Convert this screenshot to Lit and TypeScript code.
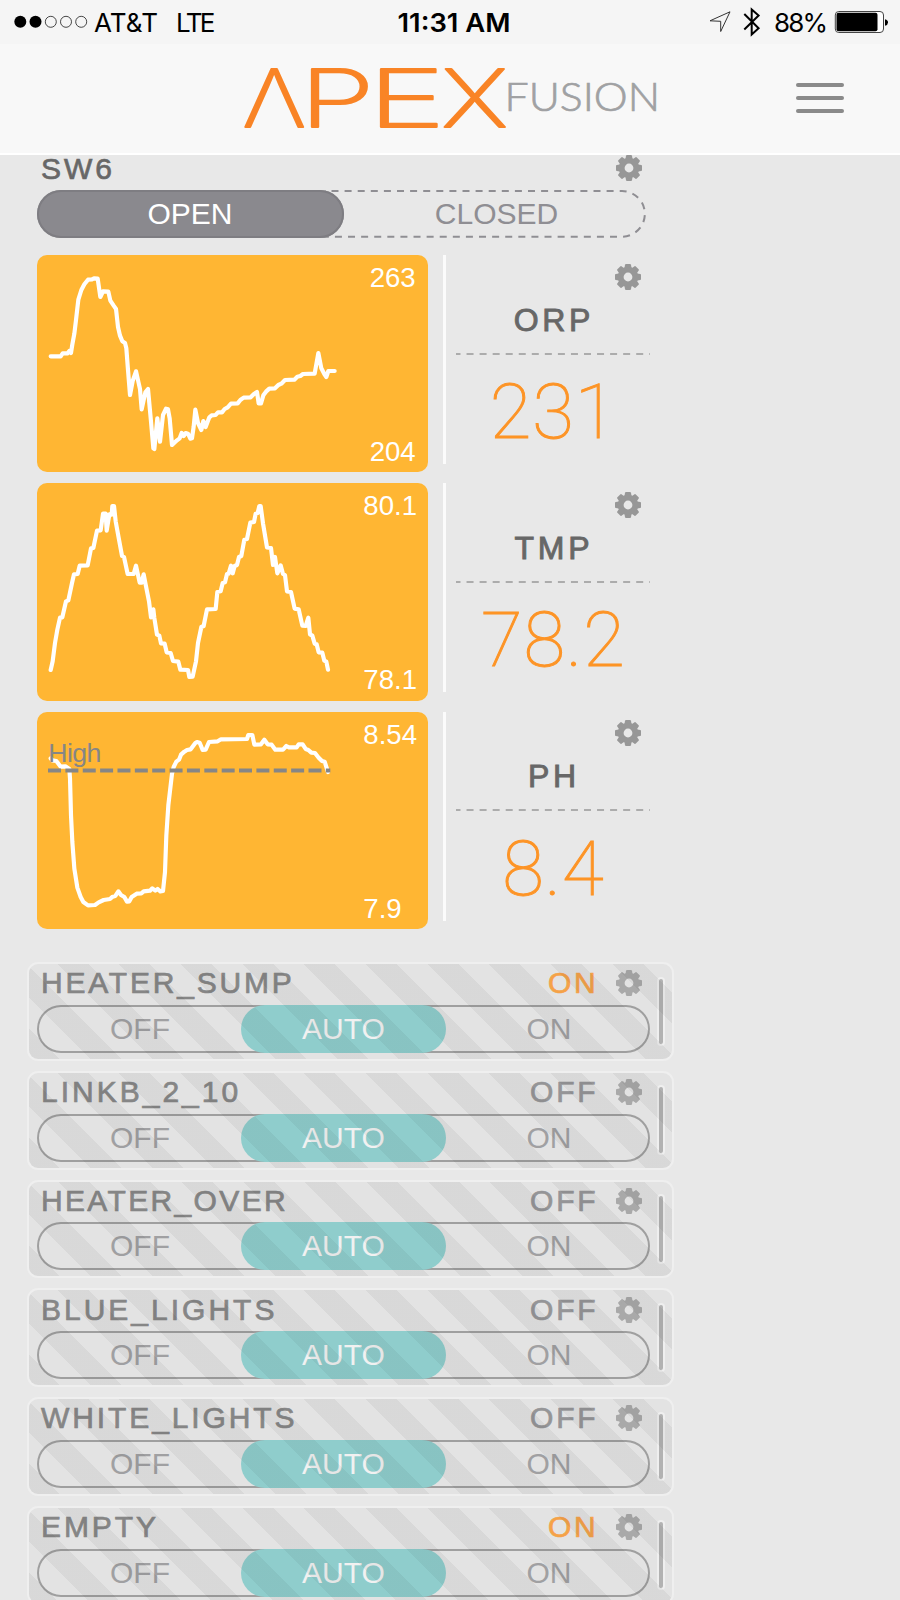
import { LitElement, html, svg, css } from "lit";
import { customElement, property } from "lit/decorators.js";

@customElement("gear-icon")
class GearIcon extends LitElement {
  static styles = css`
    :host { display: block; width: 26px; height: 26px; }
    svg { display: block; }
  `;
  render() {
    return html`<svg width="26" height="26" viewBox="-13 -13 26 26" fill="currentColor">
      ${[0, 45, 90, 135, 180, 225, 270, 315].map(
        (a) => svg`<path transform="rotate(${a})" d="M-3.7 -8 L-3 -12.2 Q-2.8 -13 -2 -13 H2 Q2.8 -13 3 -12.2 L3.7 -8 Z"/>`
      )}
      <circle r="7.3" fill="none" stroke="currentColor" stroke-width="5.8" />
    </svg>`;
  }
}

interface Probe {
  name: string;
  value: string;
  high: string;
  low: string;
  labelX: number;
  points: string;
  limit?: string;
}

@customElement("probe-row")
class ProbeRow extends LitElement {
  @property({ attribute: false }) probe!: Probe;
  static styles = css`
    :host { display: flex; height: 217.4px; margin-bottom: 10.9px; }
    .chart { width: 391px; height: 217.4px; border-radius: 10px; background: #ffb633; overflow: hidden; }
    .chart svg { display: block; }
    .chart text { font-family: "Liberation Sans", Arial, sans-serif; }
    .side {
      box-sizing: border-box; margin-left: 15.3px; width: 206.7px; height: 209px;
      border-left: 3px solid #fbfbfb; padding: 8.5px 0 0 9.5px;
      display: flex; flex-direction: column; align-items: center;
    }
    gear-icon { align-self: flex-end; margin-right: 8.5px; color: #979797; }
    .name {
      font-size: 32px; line-height: 32px; letter-spacing: 3.7px; margin: 14px -2px 0 0; color: #676767;
      -webkit-text-stroke: 0.9px #676767;
    }
    .rule { display: block; margin-top: 17px; }
    .value { font: 100 76px/76px Roboto, sans-serif; color: #fd9426; margin: 19.6px -1px 0 0; letter-spacing: 0.9px; -webkit-text-stroke: 1px #fd9426; }
  `;
  render() {
    const p = this.probe;
    return html`
      <div class="chart">
        <svg width="391" height="217.4" viewBox="0 0 391 217.4">
          <g transform="scale(.33333)">
            <polyline points=${p.points} fill="none" stroke="#fff" stroke-width="12.5" stroke-linejoin="round" stroke-linecap="round" />
            ${p.limit
              ? svg`<path d="M33 175.5H880" stroke="#868686" stroke-width="12" stroke-dasharray="39 13.1"/>
                 <text x="34" y="150" font-size="80" fill="#868686" textLength="159">${p.limit}</text>`
              : null}
          </g>
          <text x=${p.labelX} y="32.4" font-size="27.6" fill="#fff">${p.high}</text>
          <text x=${p.labelX} y="206.3" font-size="27.6" fill="#fff">${p.low}</text>
        </svg>
      </div>
      <div class="side">
        <gear-icon></gear-icon>
        <div class="name">${p.name}</div>
        <svg class="rule" width="194" height="2" viewBox="0 0 194 2">
          <path d="M0 1H194" stroke="#acacac" stroke-width="2" stroke-dasharray="7 6.05" stroke-dashoffset="2.5" />
        </svg>
        <div class="value">${p.value}</div>
      </div>
    `;
  }
}

@customElement("outlet-row")
class OutletRow extends LitElement {
  @property() name = "";
  @property() state = "OFF";
  @property({ type: Number }) tracking = 2.8;
  static styles = css`
    :host {
      display: flex; position: relative; box-sizing: border-box; height: 98.6px; margin: 0 0 10.15px -10px;
      width: 647px; border: 2px solid #efefef; border-radius: 11px; background: #e3e3e3; padding-left: 8px;
    }
    :host::after {
      content: ""; position: absolute; inset: 0; border-radius: 9px; pointer-events: none;
      background: repeating-linear-gradient(45deg, rgba(0,0,0,.046) 0 21.8px, transparent 21.8px 43.6px);
    }
    .main { width: 613px; }
    .title {
      box-sizing: border-box; height: 40.7px; padding: 0 8px 2.4px 4px; display: flex; align-items: center;
      font-size: 30px; line-height: 30px; letter-spacing: 2.8px; color: #868686; -webkit-text-stroke: 0.7px;
    }
    .name { flex: 1; }
    .state { margin-right: 17.5px; color: #959597; }
    .state.on { color: #f5a248; }
    gear-icon { color: #a9a9a9; }
    .seg {
      box-sizing: border-box; height: 48px; border-radius: 24px; box-shadow: inset 0 0 0 2px #9f9f9f;
      display: flex; font-size: 30px; line-height: 48px; text-align: center; color: #a0a0a2;
    }
    .seg span { flex: 1; padding-left: 2px; }
    .seg .auto { flex: none; width: 205px; padding: 0; border-radius: 24px; background: #8fcdcc; color: #f1f1f1; }
    .grip {
      box-sizing: border-box; width: 8.6px; height: 69.5px; margin: 12.5px 0 0 6.8px;
      background: #b2b2b2; border: 2px solid #efefef; border-radius: 4.3px;
    }
  `;
  render() {
    return html`
      <div class="main">
        <div class="title">
          <span class="name" style="letter-spacing:${this.tracking}px">${this.name}</span>
          <span class="state ${this.state === "ON" ? "on" : ""}">${this.state}</span>
          <gear-icon></gear-icon>
        </div>
        <div class="seg"><span>OFF</span><span class="auto">AUTO</span><span>ON</span></div>
      </div>
      <div class="grip"></div>
    `;
  }
}

const PROBES: Probe[] = [
  {
    name: "ORP", value: "231", high: "263", low: "204", labelX: 332.7,
    points:
      "41,304 71,304 77,295 92,295 97,288 102,294 106,268 112,236 117,195 121,160 124,134 133,105 142,88 153,74 165,73 171,70 182,71 190,126 198,109 214,110 220,137 230,152 237,162 243,216 249,242 256,259 264,264 268,280 273,345 279,420 287,378 297,349 304,380 309,402 314,463 325,412 333,402 342,500 349,580 352,582 361,490 369,560 378,480 387,461 393,463 398,490 405,570 420,556 428,550 434,534 440,543 446,534 453,536 460,551 465,550 470,515 475,464 483,504 493,525 499,498 506,516 517,487 524,481 536,480 543,472 555,472 563,462 572,457 582,446 602,445 610,435 620,428 641,427 650,418 660,411 665,445 672,445 679,421 687,410 697,401 714,400 724,390 733,386 744,375 772,374 781,365 790,363 798,357 833,356 844,294 853,340 862,357 868,366 874,348 893,348",
  },
  {
    name: "TMP", value: "78.2", high: "80.1", low: "78.1", labelX: 326.3,
    points:
      "41,561 47,535 54,480 61,440 69,404 76,403 87,355 94,352 105,300 111,274 122,273 128,248 152,247 162,196 169,195 180,143 191,142 198,92 206,92 209,143 217,94 224,95 226,69 231,69 236,115 246,170 255,219 261,222 272,273 290,273 297,248 308,299 314,299 320,274 326,305 336,355 342,403 349,379 352,405 360,455 367,458 372,481 383,482 389,508 401,510 408,534 424,536 430,560 453,561 457,582 467,581 477,535 483,480 493,432 500,429 510,379 536,378 541,327 551,325 557,300 564,298 570,273 575,272 582,248 587,271 593,249 600,246 606,222 613,219 622,170 630,168 640,119 651,117 656,92 662,90 667,69 671,69 678,121 690,193 702,195 708,246 714,222 721,271 731,247 738,273 744,276 750,325 762,327 773,377 785,379 796,428 806,429 814,404 819,454 826,458 833,482 839,484 845,508 856,509 862,533 868,536 873,560",
  },
  {
    name: "PH", value: "8.4", high: "8.54", low: "7.9", labelX: 326.3, limit: "High",
    points:
      "41,139 46,145 58,147 71,164 85,163 97,171 99,200 102,310 106,390 112,470 121,527 131,555 139,570 153,580 174,579 185,571 200,564 219,561 227,554 235,552 244,538 252,549 262,555 270,569 277,568 284,555 299,545 313,544 320,538 339,536 346,529 355,536 362,531 370,538 378,537 384,480 388,370 394,280 405,185 410,165 418,149 426,143 432,128 442,119 450,114 461,112 475,93 480,90 488,92 497,114 506,113 516,90 542,88 552,82 630,81 634,69 646,69 652,98 672,97 682,83 692,97 704,98 715,113 738,113 748,102 756,106 779,106 785,97 797,97 806,111 814,114 823,122 834,123 845,137 855,147 863,149 871,174 873,180",
  },
];

const OUTLETS: [string, string, number][] = [
  ["HEATER_SUMP", "ON", 2.8],
  ["LINKB_2_10", "OFF", 3],
  ["HEATER_OVER", "OFF", 2.35],
  ["BLUE_LIGHTS", "OFF", 3],
  ["WHITE_LIGHTS", "OFF", 2.9],
  ["EMPTY", "ON", 2.9],
];

@customElement("app-root")
class AppRoot extends LitElement {
  static styles = css`
    :host {
      display: block; height: 1600px; overflow: hidden; background: #e8e8e8;
      font-family: "Liberation Sans", Arial, sans-serif;
    }
    svg { display: block; overflow: visible; }
    .status { display: flex; justify-content: space-between; height: 44px; background: #f5f5f5; }
    .status text { font-family: Inter, sans-serif; font-size: 26px; }
    .header {
      box-sizing: border-box; height: 110.5px; padding: 0 56px 0 240px; background: #f8f8f8;
      border-bottom: 2px solid #fff; display: flex; justify-content: space-between; align-items: flex-start;
    }
    .apex { font-family: Inter, sans-serif; font-weight: 200; font-size: 79.5px; }
    .fusion { font-family: Lato, sans-serif; font-weight: 300; font-size: 38.5px; }
    .menu { margin-top: 38.5px; display: flex; flex-direction: column; gap: 8.7px; }
    .menu i { display: block; width: 48px; height: 4.4px; border-radius: 2.2px; background: #8a8a8a; }
    .content { padding-left: 37px; width: 613px; padding-top: 0.5px; }
    .title { display: flex; justify-content: space-between; align-items: center; height: 26px; padding: 0 8px 0 4px; margin-bottom: 9px; }
    .title span { font-size: 30px; line-height: 26px; letter-spacing: 3px; color: #676767; -webkit-text-stroke: 0.7px #676767; padding-top: 1px; }
    .title gear-icon { color: #979797; }
    .switch { display: grid; width: 609px; height: 48px; margin-bottom: 17px; }
    .switch > * { grid-area: 1 / 1; }
    .options { display: flex; font-size: 30px; line-height: 48px; text-align: center; }
    .open { box-sizing: border-box; width: 307px; border-radius: 24px; background: #8a898e; box-shadow: inset 0 0 0 2px #7e7d82; color: #fff; padding-right: 1px; }
    .closed { flex: 1; color: #8f8e93; padding-left: 3px; }
    .outlets { padding-top: 22.4px; }
  `;
  render() {
    return html`
      <div class="status">
        <svg width="230" height="44">
          <circle cx="20.3" cy="21.8" r="6" /><circle cx="35.5" cy="21.8" r="6" />
          ${[50.8, 66, 81.2].map((x) => svg`<circle cx=${x} cy="21.8" r="5.5" fill="none" stroke="#333" stroke-width=".9"/>`)}
          <text x="94" y="32" textLength="64">AT&amp;T</text>
          <text x="176" y="32" textLength="39.5">LTE</text>
        </svg>
        <svg width="120" height="44">
          <text x="7.5" y="32" textLength="113" lengthAdjust="spacingAndGlyphs" font-weight="600">11:31 AM</text>
        </svg>
        <svg width="230" height="44" viewBox="670 0 230 44">
          <path d="M710 20.8L730 11.8L720.7 31.5V21.3Z" fill="none" stroke="#333" stroke-width="1" />
          <path d="M744.3 14L758.6 28.3L751.7 34.5V9.5L758.6 15.5L744.3 29.5" fill="none" stroke="#000" stroke-width="2" />
          <text x="774" y="32" textLength="54">88%</text>
          <rect x="835.3" y="11.5" width="48.2" height="21" rx="3.5" fill="#fff" stroke="#444" stroke-width="1" />
          <rect x="836.5" y="12.8" width="41" height="18.4" rx="2" />
          <path d="M885 19.2Q888 20 888 22.4T885 25.8Z" />
        </svg>
      </div>
      <div class="header">
        <svg width="420" height="108" viewBox="240 44 420 108">
          <g class="apex" fill="#f98426" stroke="#f98426" stroke-width="1.8" stroke-linejoin="round">
            <text x="242.5" y="126.6" textLength="63.5" lengthAdjust="spacingAndGlyphs">Λ</text>
            <text x="299.5" y="126.6" textLength="75" lengthAdjust="spacingAndGlyphs">P</text>
            <text x="367.5" y="126.6" textLength="78" lengthAdjust="spacingAndGlyphs">E</text>
            <text x="441.5" y="126.6" textLength="66.5" lengthAdjust="spacingAndGlyphs">X</text>
          </g>
          <text class="fusion" x="504.5" y="110.6" fill="#a0a1a3" stroke="#a0a1a3" stroke-width=".7" textLength="155.5" lengthAdjust="spacingAndGlyphs">FUSION</text>
        </svg>
        <div class="menu"><i></i><i></i><i></i></div>
      </div>
      <div class="content">
        <div class="title"><span>SW6</span><gear-icon></gear-icon></div>
        <div class="switch">
          <svg width="609" height="48">
            <path d="M288 1H585A22.8 22.8 0 0 1 585 46.7H281" fill="none" stroke="#8f8e93" stroke-width="2" stroke-dasharray="7 6.1" stroke-dashoffset="-6.5" />
          </svg>
          <div class="options"><div class="open">OPEN</div><div class="closed">CLOSED</div></div>
        </div>
        ${PROBES.map((p) => html`<probe-row .probe=${p}></probe-row>`)}
        <div class="outlets">
          ${OUTLETS.map(([n, s, t]) => html`<outlet-row .name=${n} .state=${s} .tracking=${t}></outlet-row>`)}
        </div>
      </div>
    `;
  }
}
